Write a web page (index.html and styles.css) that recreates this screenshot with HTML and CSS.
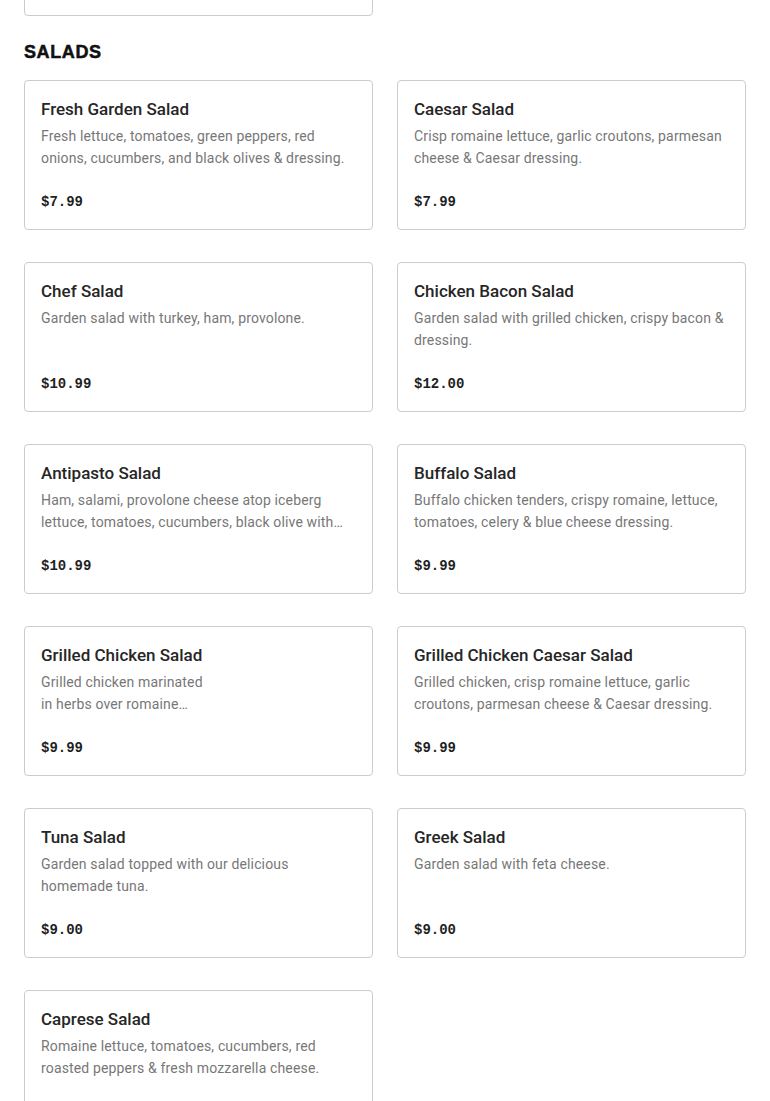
FILE: index.html
```html
<!DOCTYPE html>
<html lang="en">
<head>
<meta charset="utf-8">
<title>Menu - Salads</title>
<link rel="stylesheet" href="styles.css">
</head>
<body>
<main class="menu">
  <section class="section section-prev">
    <div class="grid">
      <article class="card">
        <h3 class="card-title">Garlic Knots</h3>
        <p class="card-desc">Freshly baked knots brushed with garlic butter.</p>
        <p class="card-price">$5.99</p>
      </article>
    </div>
  </section>

  <section class="section">
    <h2 class="section-title">SALADS</h2>
    <div class="grid">
      <article class="card">
        <h3 class="card-title">Fresh Garden Salad</h3>
        <p class="card-desc">Fresh lettuce, tomatoes, green peppers, red onions, cucumbers, and black olives &amp; dressing.</p>
        <p class="card-price">$7.99</p>
      </article>
      <article class="card">
        <h3 class="card-title">Caesar Salad</h3>
        <p class="card-desc">Crisp romaine lettuce, garlic croutons, parmesan cheese &amp; Caesar dressing.</p>
        <p class="card-price">$7.99</p>
      </article>
      <article class="card">
        <h3 class="card-title">Chef Salad</h3>
        <p class="card-desc">Garden salad with turkey, ham, provolone.</p>
        <p class="card-price">$10.99</p>
      </article>
      <article class="card">
        <h3 class="card-title">Chicken Bacon Salad</h3>
        <p class="card-desc">Garden salad with grilled chicken, crispy bacon &amp; dressing.</p>
        <p class="card-price">$12.00</p>
      </article>
      <article class="card">
        <h3 class="card-title">Antipasto Salad</h3>
        <p class="card-desc">Ham, salami, provolone cheese atop iceberg lettuce, tomatoes, cucumbers, black olive with pepperoncini &amp; Italian dressing.</p>
        <p class="card-price">$10.99</p>
      </article>
      <article class="card">
        <h3 class="card-title">Buffalo Salad</h3>
        <p class="card-desc">Buffalo chicken tenders, crispy romaine, lettuce, tomatoes, celery &amp; blue cheese dressing.</p>
        <p class="card-price">$9.99</p>
      </article>
      <article class="card">
        <h3 class="card-title">Grilled Chicken Salad</h3>
        <p class="card-desc">Grilled chicken marinated<br>in herbs over romaine<br>lettuce, tomatoes &amp; cucumbers.</p>
        <p class="card-price">$9.99</p>
      </article>
      <article class="card">
        <h3 class="card-title">Grilled Chicken Caesar Salad</h3>
        <p class="card-desc">Grilled chicken, crisp romaine lettuce, garlic croutons, parmesan cheese &amp; Caesar dressing.</p>
        <p class="card-price">$9.99</p>
      </article>
      <article class="card">
        <h3 class="card-title">Tuna Salad</h3>
        <p class="card-desc">Garden salad topped with our delicious homemade tuna.</p>
        <p class="card-price">$9.00</p>
      </article>
      <article class="card">
        <h3 class="card-title">Greek Salad</h3>
        <p class="card-desc">Garden salad with feta cheese.</p>
        <p class="card-price">$9.00</p>
      </article>
      <article class="card">
        <h3 class="card-title">Caprese Salad</h3>
        <p class="card-desc">Romaine lettuce, tomatoes, cucumbers, red roasted peppers &amp; fresh mozzarella cheese.</p>
        <p class="card-price">$9.99</p>
      </article>
    </div>
  </section>
</main>
</body>
</html>
```

FILE: styles.css
```css
* {
  box-sizing: border-box;
}

html, body {
  margin: 0;
  padding: 0;
  background: #ffffff;
}

body {
  font-family: Roboto, "Noto Sans", "Liberation Sans", sans-serif;
  color: #2b2b2b;
}

.menu {
  padding: 0 24px;
  margin-top: -134px;
}

.section {
  display: flex;
  flex-direction: column;
}

.section-prev {
  padding-bottom: 24px;
}

.section-title {
  margin: 0 0 16px 0;
  font-family: "Liberation Sans", Arial, sans-serif;
  font-weight: 700;
  font-size: 18px;
  line-height: 24px;
  letter-spacing: 0.6px;
  color: #111111;
  -webkit-text-stroke: 0.5px #111111;
}

.grid {
  display: grid;
  grid-template-columns: 349px 349px;
  column-gap: 24px;
  row-gap: 32px;
}

.card {
  border: 1px solid #cccccc;
  border-radius: 4px;
  padding: 16px;
  display: flex;
  flex-direction: column;
  height: 150px;
  background: #ffffff;
}

.card-title {
  margin: 0;
  font-size: 17px;
  font-weight: 500;
  line-height: 24px;
  color: #262626;
}

.card-desc {
  margin: 4px 0 0 0;
  font-size: 14px;
  line-height: 22px;
  color: #777777;
  letter-spacing: 0.15px;
  height: 44px;
  overflow: hidden;
  display: -webkit-box;
  -webkit-line-clamp: 2;
  -webkit-box-orient: vertical;
}

.card-price {
  margin: 22px 0 0 0;
  font-family: "Liberation Mono", "DejaVu Sans Mono", monospace;
  font-weight: 700;
  font-size: 14px;
  line-height: 22px;
  color: #1f1f1f;
}
```
